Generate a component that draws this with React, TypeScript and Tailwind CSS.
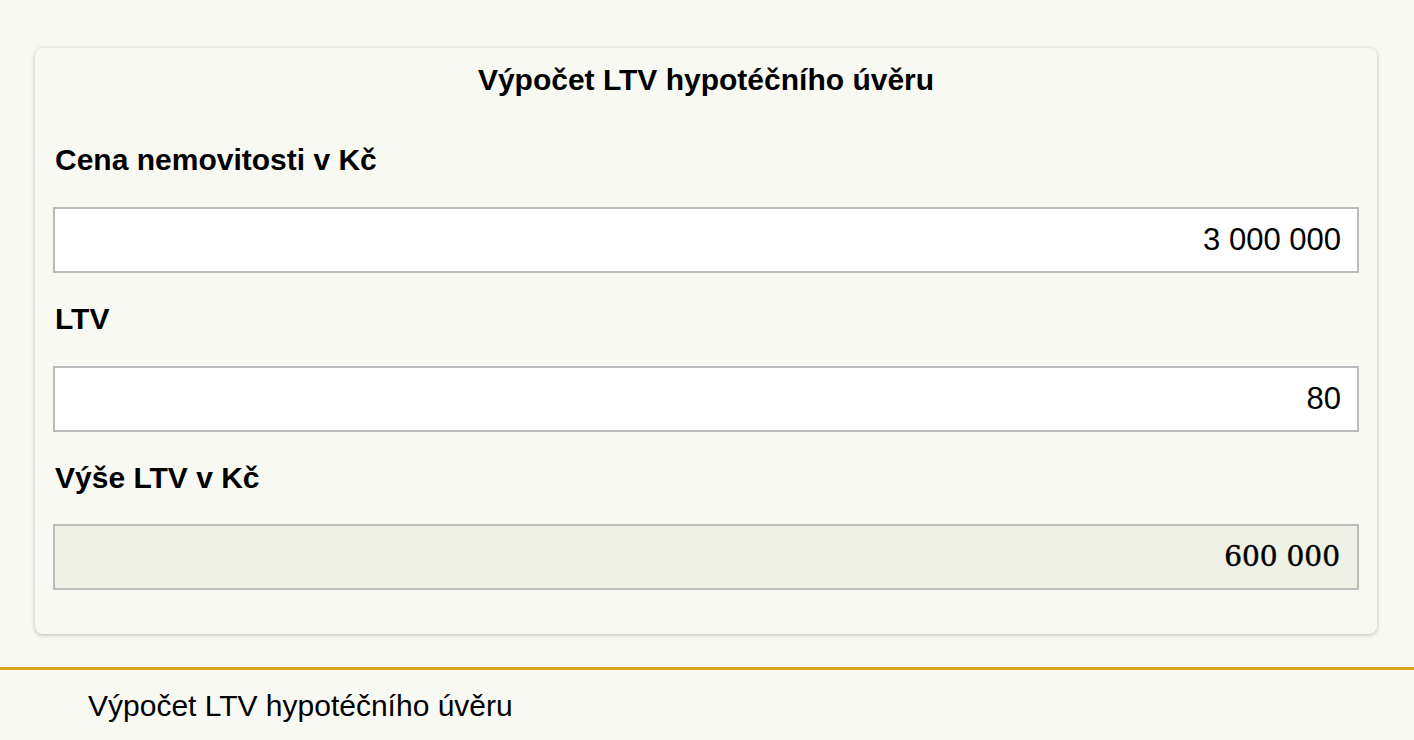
import React from "react";

export default function App() {
  return (
    <div className="min-h-[740px] w-full bg-[#f9f9f4] font-['Liberation_Sans',Arial,sans-serif] text-black">
      <div className="pl-[35px] pr-[37px] pt-[48px]">
        <div className="rounded-[8px] bg-[#f9f9f4] px-[18px] pt-[15px] pb-[44px] shadow-[0_1px_4px_rgba(0,0,0,0.25)]">
          <h1 className="text-center text-[30px] font-bold leading-[34px]">Výpočet LTV hypotéčního úvěru</h1>
          <label className="mt-[46px] block pl-[2px] text-[30px] font-bold leading-[34px]">Cena nemovitosti v Kč</label>
          <div className="mt-[30px] flex h-[66px] items-center justify-end border-2 border-[#bbbbbb] bg-white pr-[16px] text-[31px]">3 000 000</div>
          <label className="mt-[29px] block pl-[2px] text-[30px] font-bold leading-[34px]">LTV</label>
          <div className="mt-[30px] flex h-[66px] items-center justify-end border-2 border-[#bbbbbb] bg-white pr-[16px] text-[31px]">80</div>
          <label className="mt-[29px] block pl-[2px] text-[30px] font-bold leading-[34px]">Výše LTV v Kč</label>
          <div className="mt-[29px] flex h-[66px] items-center justify-end border-2 border-[#bbbbbb] bg-[#f0f1e6] pr-[17px] font-['DejaVu_Serif',serif] text-[28px] [-webkit-text-stroke:0.5px_black]">600 000</div>
        </div>
      </div>
      <div className="mt-[33px] border-t-[3px] border-[#daa520] pl-[88px] pt-[19px] text-[30px] leading-[34px]">
        Výpočet LTV hypotéčního úvěru
      </div>
    </div>
  );
}
